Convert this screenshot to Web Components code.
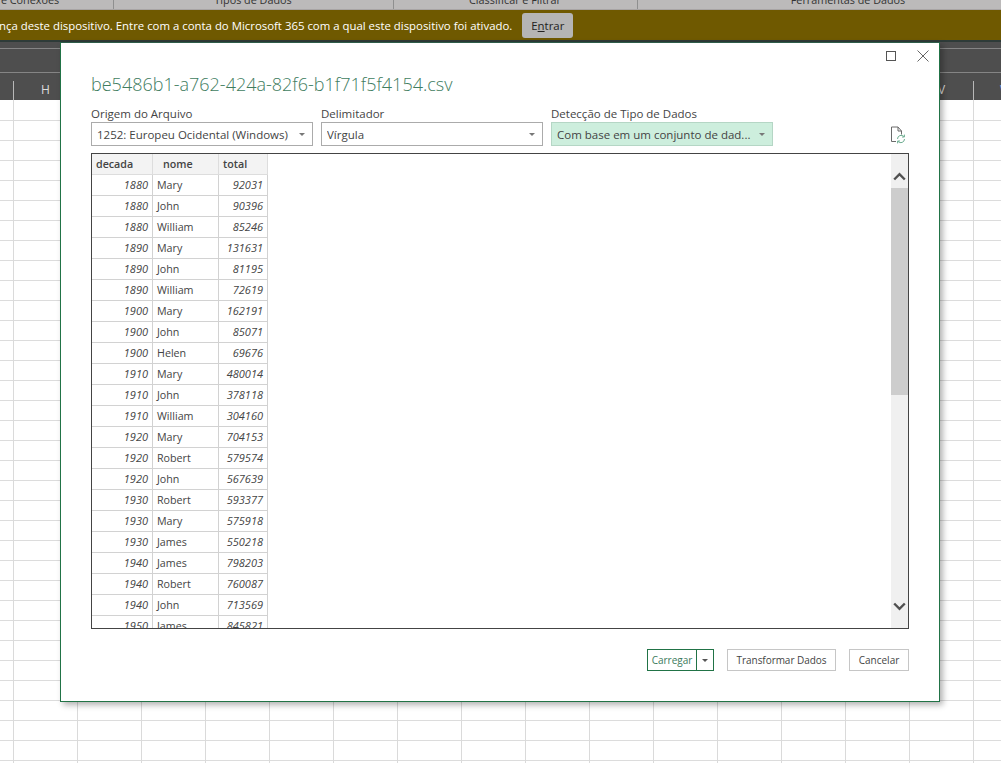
<!DOCTYPE html>
<html lang="pt">
<head>
<meta charset="utf-8">
<title>Importar CSV</title>
<style>
  html, body { margin: 0; height: 100%; overflow: hidden; background: #fff; }
  body { font-family: "Open Sans", "Noto Sans", sans-serif; }
</style>
</head>
<body>
<xl-window>
  <xl-csv-dialog file="be5486b1-a762-424a-82f6-b1f71f5f4154.csv"></xl-csv-dialog>
</xl-window>

<script>
const FONT = `"Open Sans", "Noto Sans", sans-serif`;

/* Excel behind the dialog */
class XlWindow extends HTMLElement {
  constructor() {
    super();
    this.attachShadow({ mode: 'open' });
  }

  connectedCallback() {
    // the columns between H and V sit under the dialog, so they stay empty
    const letters = ['H', ...Array(13).fill(''), 'V', 'W'].map(l => `<span>${l}</span>`).join('');
    this.shadowRoot.innerHTML = `
      <style>
        :host { display: flex; flex-direction: column; width: 1001px; height: 763px; position: relative; overflow: hidden; font-family: ${FONT}; }
        .ribbon { height: 10px; flex: none; background: #bcbaba; border-bottom: 1px solid #a8a4a4; box-sizing: border-box; position: relative; overflow: hidden; }
        .ribbon span { position: absolute; bottom: 2px; font-size: 10.8px; line-height: 14px; color: #333; white-space: nowrap; transform: translateX(-50%); }
        .ribbon i { position: absolute; top: 0; bottom: 0; width: 1px; background: #8f8f8f; }
        .banner { height: 30px; flex: none; background: #6f5900; display: flex; align-items: center; gap: 10px; overflow: hidden; box-sizing: border-box; }
        .banner .msg { font-size: 11.4px; color: #fff; white-space: nowrap; margin-left: -1px; }
        .banner button { all: unset; width: 51px; height: 25px; background: #b5b5b5; border-radius: 3px; text-align: center; font-size: 11.4px; line-height: 25px; color: #222; flex: none; }
        .dark { height: 60px; flex: none; background: #4e4e4e; border-top: 2px solid #2e3b38; box-sizing: border-box; display: flex; flex-direction: column; }
        .formula { height: 23px; margin-top: 6px; flex: none; border-top: 1px solid #858585; border-bottom: 1px solid #858585; }
        .cols { flex: 1; display: grid; grid-template-columns: 13px repeat(16, 64px); overflow: hidden; }
        .cols span { font-size: 12px; color: #ddd; text-align: center; border-left: 1px solid #b8b8b8; margin-top: 8px; line-height: 17px; }
        .cols span:first-child { border: 0; }
        .cols span:last-child { color: #8fb0e0; }
        .grid { flex: 1;
          background-image:
            repeating-linear-gradient(to right, #dadada 0 1px, transparent 1px 64px),
            repeating-linear-gradient(to bottom, transparent 0 19px, #dcdcdc 19px 20px);
          background-position: 13px 0, 0 1px;
        }
      </style>
      <div class="ribbon">
        <span style="left:30px">e Conexões</span><i style="left:113px"></i>
        <span style="left:253px">Tipos de Dados</span><i style="left:393px"></i>
        <span style="left:515px">Classificar e Filtrar</span><i style="left:637px"></i>
        <span style="left:848px">Ferramentas de Dados</span>
      </div>
      <div class="banner">
        <span class="msg">nça deste dispositivo. Entre com a conta do Microsoft 365 com a qual este dispositivo foi ativado.</span>
        <button>E<u>n</u>trar</button>
      </div>
      <div class="dark">
        <div class="formula"></div>
        <div class="cols"><span></span>${letters}</div>
      </div>
      <div class="grid"></div>
      <slot></slot>
    `;
  }
}

/* small dropdown with label */
class XlSelect extends HTMLElement {
  constructor() {
    super();
    this.attachShadow({ mode: 'open' });
  }

  connectedCallback() {
    this.shadowRoot.innerHTML = `
      <style>
        :host { display: flex; flex-direction: column; width: 222px; font-size: 11.5px; color: #444; }
        label { line-height: 16px; height: 16px; white-space: nowrap; }
        .box { height: 22px; border: 1px solid #ababab; display: flex; align-items: center; padding: 0 5px; gap: 4px; white-space: nowrap; }
        :host([changed]) .box { background: #cdeedd; border-color: #b5d6c5; }
        .val { flex: 1; overflow: hidden; }
        .arr { width: 0; height: 0; border: 3px solid transparent; border-top: 3px solid #777; border-bottom: 0; margin-right: 2px; }
      </style>
      <label>${this.getAttribute('label')}</label>
      <div class="box"><span class="val">${this.getAttribute('value')}</span><span class="arr"></span></div>
    `;
  }
}

/* preview table */
class XlPreview extends HTMLElement {
  constructor() {
    super();
    this.attachShadow({ mode: 'open' });
  }

  connectedCallback() {
    const rows = [
      [1880,'Mary',92031],[1880,'John',90396],[1880,'William',85246],
      [1890,'Mary',131631],[1890,'John',81195],[1890,'William',72619],
      [1900,'Mary',162191],[1900,'John',85071],[1900,'Helen',69676],
      [1910,'Mary',480014],[1910,'John',378118],[1910,'William',304160],
      [1920,'Mary',704153],[1920,'Robert',579574],[1920,'John',567639],
      [1930,'Robert',593377],[1930,'Mary',575918],[1930,'James',550218],
      [1940,'James',798203],[1940,'Robert',760087],[1940,'John',713569],
      [1950,'James',845821]
    ];
    const body = rows.map(r => `<div class="c n">${r[0]}</div><div class="c">${r[1]}</div><div class="c n">${r[2]}</div>`).join('');
    this.shadowRoot.innerHTML = `
      <style>
        :host { display: flex; height: 476px; box-sizing: border-box; border: 1px solid #444; overflow: hidden; font-size: 10.7px; color: #444; }
        .tbl { flex: 1; overflow: hidden; }
        .grid { display: grid; grid-template-columns: 61px 66px 49px; grid-auto-rows: 21px; width: 176px; }
        .h { background: #f3f3f3; font-weight: 600; line-height: 20px; padding: 0 4px; border-bottom: 1px solid #ddd; border-right: 1px solid #ddd; }
        .c { line-height: 20px; padding: 0 4px; border-bottom: 1px solid #d2d2d2; border-right: 1px solid #d2d2d2; white-space: nowrap; }
        .n { text-align: right; font-style: italic; font-size: 11px; }
        .h.m { padding-left: 10px; }
        .scroll { width: 17px; flex: none; background: #f0f0f0; display: flex; flex-direction: column; }
        .btn { height: 34px; flex: none; display: flex; align-items: center; justify-content: center; box-sizing: border-box; padding-top: 10px; }
        .thumb { height: 207px; flex: none; background: #cdcdcd; }
        .track { flex: 1; }
        .btn.down { height: 44px; padding-top: 0; }
      </style>
      <div class="tbl"><div class="grid">
        <div class="h">decada</div><div class="h m">nome</div><div class="h">total</div>
        ${body}
      </div></div>
      <div class="scroll">
        <div class="btn"><svg width="13" height="9" viewBox="0 0 13 9"><path d="M1.2 7.5 6.5 2.2 11.8 7.5" fill="none" stroke="#505050" stroke-width="2.4"/></svg></div>
        <div class="thumb"></div>
        <div class="track"></div>
        <div class="btn down"><svg width="13" height="9" viewBox="0 0 13 9"><path d="M1.2 1.5 6.5 6.8 11.8 1.5" fill="none" stroke="#505050" stroke-width="2.4"/></svg></div>
      </div>
    `;
  }
}

/* the import dialog */
class XlCsvDialog extends HTMLElement {
  constructor() {
    super();
    this.attachShadow({ mode: 'open' });
  }

  connectedCallback() {
    this.shadowRoot.innerHTML = `
      <style>
        :host { position: absolute; left: 60px; top: 42px; width: 880px; height: 660px; box-sizing: border-box; background: #fff; border: 1px solid #217346; border-top-color: #2f5d4a; box-shadow: 3px 3px 6px rgba(0,0,0,.3); padding: 0 30px; display: flex; flex-direction: column; font-family: ${FONT}; color: #444; }
        .wbtns { display: flex; justify-content: flex-end; gap: 21px; height: 20px; margin: 0 -20px 0 0; padding-top: 8px; flex: none; }
        h1 { margin: -1px 0 0; font-size: 18px; font-weight: 300; line-height: 28px; height: 28px; color: #3f7d5f; white-space: nowrap; }
        .ctrl { display: flex; gap: 8px; margin-top: 8px; align-items: flex-start; }
        .refresh { margin-left: auto; margin-top: 20px; margin-right: 3px; }
        xl-preview { margin-top: 7px; }
        .foot { display: flex; justify-content: flex-end; margin-top: 20px; font-size: 10px; }
        .b { height: 22px; box-sizing: border-box; border: 1px solid #c6c6c6; display: flex; align-items: center; justify-content: center; color: #444; white-space: nowrap; }
        .split { width: 67px; border-color: #217346; color: #3c7a5b; margin-right: 13px; }
        .split span { flex: 1; text-align: center; line-height: 20px; }
        .split em { width: 16px; height: 100%; border-left: 1px solid #217346; display: flex; align-items: center; justify-content: center; }
        .split em::after { content: ""; border: 3px solid transparent; border-top-color: #555; border-bottom: 0; }
        .tf { width: 109px; margin-right: 13px; letter-spacing: -.05px; }
        .cc { width: 60px; }
      </style>
      <div class="wbtns">
        <svg width="10" height="10" viewBox="0 0 10 10"><rect x=".5" y=".5" width="9" height="9" fill="none" stroke="#555"/></svg>
        <svg width="12" height="12" viewBox="0 0 12 12" style="margin-top:-1px"><path d="M.5.5 11.500 11.500M11.500.5.5 11.500" fill="none" stroke="#666"/></svg>
      </div>
      <h1>${this.getAttribute('file')}</h1>
      <div class="ctrl">
        <xl-select label="Origem do Arquivo" value="1252: Europeu Ocidental (Windows)"></xl-select>
        <xl-select label="Delimitador" value="Vírgula"></xl-select>
        <xl-select changed label="Detecção de Tipo de Dados" value="Com base em um conjunto de dad..."></xl-select>
        <svg class="refresh" width="16" height="18" viewBox="0 0 16 18">
          <path d="M6 15.500H1.500V1H8l3.500 4v3.500M8 1v4h3.500" fill="none" stroke="#6a6a6a"/>
          <path d="M7.500 13a3.700 3.700 0 0 1 6.500-2.400M14.500 13a3.700 3.700 0 0 1-6.500 2.400M14.400 8.600v2.400H12M7.600 17.400V15H10" fill="none" stroke="#6fae92"/>
        </svg>
      </div>
      <xl-preview></xl-preview>
      <div class="foot">
        <div class="b split"><span>Carregar</span><em></em></div>
        <div class="b tf">Transformar Dados</div>
        <div class="b cc">Cancelar</div>
      </div>
    `;
  }
}

customElements.define('xl-window', XlWindow);
customElements.define('xl-select', XlSelect);
customElements.define('xl-preview', XlPreview);
customElements.define('xl-csv-dialog', XlCsvDialog);
</script>
</body>
</html>
